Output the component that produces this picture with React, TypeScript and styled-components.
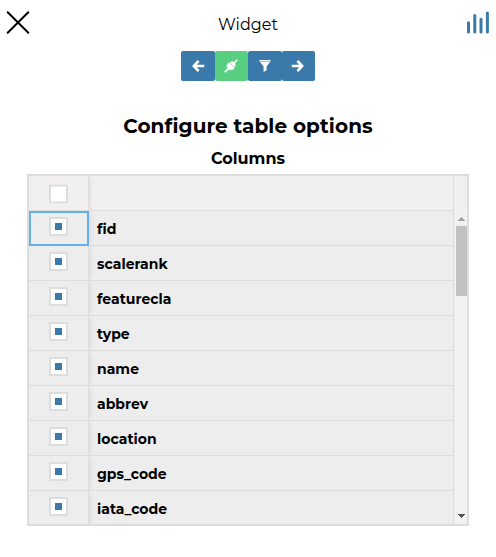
import React from "react";
import styled, { createGlobalStyle } from "styled-components";

const Global = createGlobalStyle`
  * { box-sizing: border-box; }
  body {
    margin: 0;
    background: #fff;
    color: #000;
    font-family: Montserrat, sans-serif;
    font-variant-ligatures: none;
    overflow: hidden;
  }
  h1, h2 { margin: 0; }
`;

const Page = styled.main`
  width: 496px;
  height: 557px;
  display: flex;
  flex-direction: column;
  background: #fff;
`;

const Header = styled.header`
  display: flex;
  justify-content: space-between;
  align-items: flex-start;
  height: 51px;
  padding: 10px 6px 0;
`;

const IconButton = styled.button`
  border: 0;
  padding: 0;
  background: none;
  width: 24px;
  height: 26px;
  svg { display: block; }
`;

const Heading = styled.span`
  font-size: 16px;
  line-height: 30px;
  font-weight: 400;
`;

const Toolbar = styled.nav`
  display: flex;
  justify-content: center;
  height: 30px;
`;

const ToolButton = styled.button<{ $active?: boolean }>`
  width: 33.5px;
  height: 30px;
  border: 0;
  padding: 0;
  display: grid;
  place-items: center;
  color: #fff;
  background: ${(p) => (p.$active ? "#58cf80" : "#3a7aab")};
  border-radius: 2px;
  svg { display: block; }
`;

const Title = styled.h1`
  margin-top: 31px;
  text-align: center;
  font-size: 20px;
  line-height: 28px;
  font-weight: 700;
  letter-spacing: 0.1px;
`;

const Subtitle = styled.h2`
  margin-top: 9px;
  text-align: center;
  font-size: 16px;
  line-height: 20px;
  font-weight: 700;
`;

const Grid = styled.section`
  width: 442px;
  height: 352px;
  margin: 5px 0 0 27px;
  border: 2px solid #ddd;
  display: flex;
  background: #ededed;
`;

const Rows = styled.div`
  flex: 1;
  overflow: hidden;
`;

const Row = styled.div<{ $header?: boolean }>`
  display: flex;
  height: 35px;
  overflow: hidden;
  background: ${(p) => (p.$header ? "#f1eff0" : "#ededed")};
`;

const SelectCell = styled.div<{ $focused?: boolean; $header?: boolean }>`
  position: relative;
  width: 60px;
  padding: ${(p) => (p.$header ? 9 : 6)}px 0 0 20px;
  border-right: 1px solid #ddd;
  border-bottom: 1px solid #ddd;
  box-shadow: 2px 0 5px -2px rgba(136, 136, 136, 0.3);
  &::after {
    content: "";
    display: ${(p) => (p.$focused ? "block" : "none")};
    position: absolute;
    inset: 0 -1px -1px 0;
    border: 2px solid #66afe9;
  }
`;

const Check = styled.span<{ $checked?: boolean }>`
  display: grid;
  place-items: center;
  width: 19px;
  height: 19px;
  border: 2px solid #ddd;
  background: #fff;
  transform: ${(p) => (p.$checked ? "none" : "translateY(-0.5px)")};
  &::after {
    content: "";
    width: 7px;
    height: 7px;
    background: ${(p) => (p.$checked ? "#3a7aab" : "transparent")};
  }
`;

const NameCell = styled.div`
  flex: 1;
  padding-left: 8px;
  border-right: 1px solid #ddd;
  border-bottom: 1px solid #ddd;
  font-size: 14px;
  line-height: 36px;
  font-weight: 700;
  letter-spacing: 0.03px;
`;

const Side = styled.div`
  width: 13px;
  display: flex;
  flex-direction: column;
  align-items: flex-end;
  background: #f1f1f1;
`;

const SideHeader = styled.div`
  width: 100%;
  height: 35px;
  background: #f1eff0;
`;

const ScrollArrow = styled.div<{ $dim?: boolean }>`
  width: 11px;
  height: 15px;
  padding: ${(p) => (p.$dim ? 6 : 5)}px 0 0 2px;
  color: ${(p) => (p.$dim ? "#a3a3a3" : "#505050")};
  svg { display: block; }
`;

const Track = styled.div`
  flex: 1;
  width: 11px;
`;

const Thumb = styled.div`
  height: 70px;
  background: #c1c1c1;
`;

const ArrowLeft = () => (
  <svg width="14" height="14" fill="none" stroke="currentColor" strokeWidth="2.7">
    <path d="M7.6 1.9 2.9 7l4.7 5.1M3 7h10.2" />
  </svg>
);

const ArrowRight = () => (
  <svg width="14" height="14" fill="none" stroke="currentColor" strokeWidth="2.7">
    <path d="M6.4 1.9 11.1 7l-4.7 5.1M11 7H.8" />
  </svg>
);

const Plug = () => (
  <svg width="14" height="14" fill="currentColor">
    <path d="M4 4.3 4.9 3.4 10.6 9.1 9.7 10 8.4 11.1 6.2 11.3 4.6 10.8 1.4 13.8.2 12.6 3.2 9.4 2.7 7.6 2.9 5.6Z" />
    <path d="M5.6 3.4 7.2 2.5 9 2.5 10 2.9 12.7.2 13.8 1.3 11.1 4 11.6 5.2 11.3 7 10.4 8.2Z" />
  </svg>
);

const Funnel = () => (
  <svg width="14" height="14" fill="currentColor">
    <path d="M1.5 1h11v1.5h-11zM2 3.1h10L8.6 7.4v3.9L5.6 13V7.4Z" />
  </svg>
);

const Bars = () => (
  <svg width="24" height="26" fill="none" stroke="#3a7aab" strokeWidth="3" strokeLinecap="round">
    <path d="M2.5 12.7v9.3M8.8 5.6V22M15 9.2V22M21.4 3V22" />
  </svg>
);

const columns = [
  "fid", "scalerank", "featurecla", "type", "name",
  "abbrev", "location", "gps_code", "iata_code",
];

export default function App() {
  return (
    <Page>
      <Global />
      <Header>
        <IconButton aria-label="Close">
          <svg width="24" height="26" fill="none" stroke="#000" strokeWidth="2" strokeLinecap="round">
            <path d="M1.7 2.2 22.3 22.8M22.3 2.2 1.7 22.8" />
          </svg>
        </IconButton>
        <Heading>Widget</Heading>
        <IconButton aria-label="Chart"><Bars /></IconButton>
      </Header>
      <Toolbar>
        <ToolButton aria-label="Back"><ArrowLeft /></ToolButton>
        <ToolButton aria-label="Connection" $active><Plug /></ToolButton>
        <ToolButton aria-label="Filter"><Funnel /></ToolButton>
        <ToolButton aria-label="Next"><ArrowRight /></ToolButton>
      </Toolbar>
      <Title>Configure table options</Title>
      <Subtitle>Columns</Subtitle>
      <Grid>
        <Rows>
          <Row $header><SelectCell $header><Check /></SelectCell><NameCell /></Row>
          {columns.map((name, i) => (
            <Row key={name}>
              <SelectCell $focused={i === 0}><Check $checked /></SelectCell>
              <NameCell>{name}</NameCell>
            </Row>
          ))}
        </Rows>
        <Side>
          <SideHeader />
          <ScrollArrow $dim>
            <svg width="7" height="4" fill="currentColor" shapeRendering="crispEdges"><path d="M3 0h1v1h1v1h1v1h1v1H0V3h1V2h1V1h1z" /></svg>
          </ScrollArrow>
          <Track><Thumb /></Track>
          <ScrollArrow>
            <svg width="7" height="4" fill="currentColor" shapeRendering="crispEdges"><path d="M0 0h7v1H6v1H5v1H4v1H3V3H2V2H1V1H0z" /></svg>
          </ScrollArrow>
        </Side>
      </Grid>
    </Page>
  );
}
